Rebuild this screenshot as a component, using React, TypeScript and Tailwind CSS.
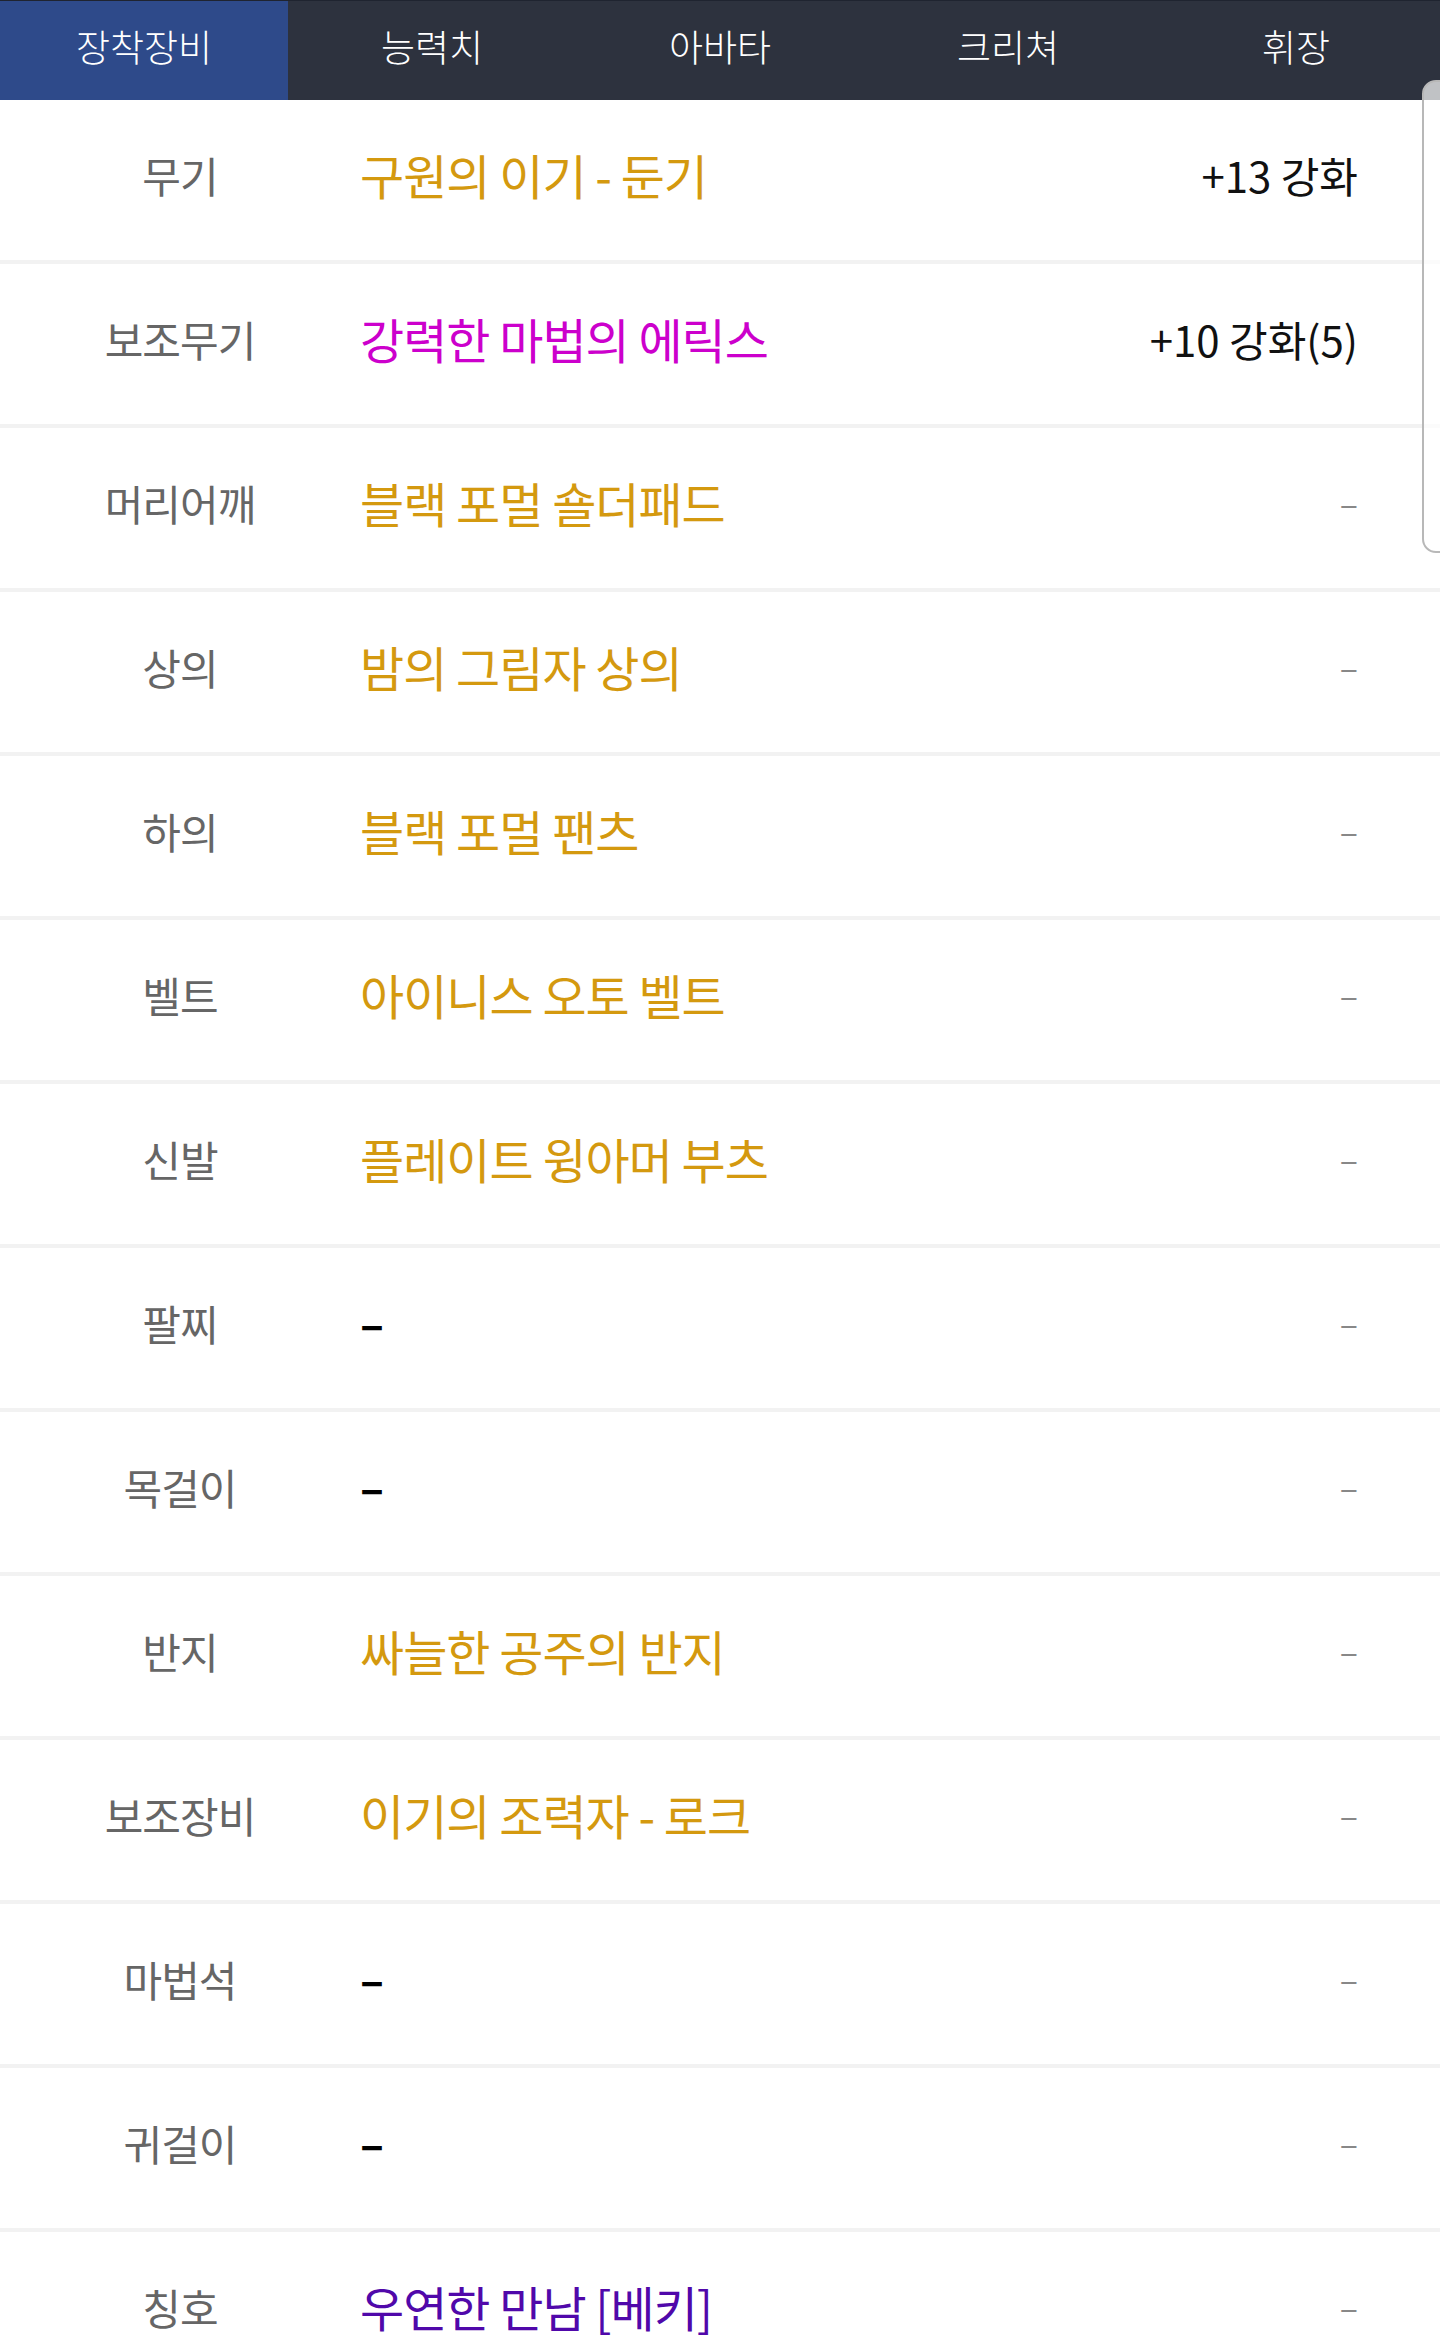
import React from "react";

const tabs = ["장착장비", "능력치", "아바타", "크리쳐", "휘장"];

type Row = { label: string; item: string; color?: string; extra?: string };

const rows: Row[] = [
  { label: "무기", item: "구원의 이기 - 둔기", color: "text-[#d4990f]", extra: "+13 강화" },
  { label: "보조무기", item: "강력한 마법의 에릭스", color: "text-[#cc00cc]", extra: "+10 강화(5)" },
  { label: "머리어깨", item: "블랙 포멀 숄더패드", color: "text-[#d4990f]" },
  { label: "상의", item: "밤의 그림자 상의", color: "text-[#d4990f]" },
  { label: "하의", item: "블랙 포멀 팬츠", color: "text-[#d4990f]" },
  { label: "벨트", item: "아이니스 오토 벨트", color: "text-[#d4990f]" },
  { label: "신발", item: "플레이트 윙아머 부츠", color: "text-[#d4990f]" },
  { label: "팔찌", item: "" },
  { label: "목걸이", item: "" },
  { label: "반지", item: "싸늘한 공주의 반지", color: "text-[#d4990f]" },
  { label: "보조장비", item: "이기의 조력자 - 로크", color: "text-[#d4990f]" },
  { label: "마법석", item: "" },
  { label: "귀걸이", item: "" },
  { label: "칭호", item: "우연한 만남 [베키]", color: "text-[#5008aa]" },
];

const font = { fontFamily: '"Noto Sans CJK KR", "Noto Sans", sans-serif' };

export default function App() {
  return (
    <div className="relative w-[1440px] bg-white" style={font}>
      <div className="flex h-[100px] bg-[#2d323e] border-t border-[#1f2430]">
        {tabs.map((t, i) => (
          <div
            key={t}
            className={
              i === 0
                ? "flex-1 flex items-center justify-center pb-[8px] bg-[#2e4a8a] text-white text-[37px] font-light"
                : "flex-1 flex items-center justify-center pb-[8px] text-white text-[37px] font-light"
            }
          >
            {t}
          </div>
        ))}
      </div>
      <div>
        {rows.map((r) => (
          <div key={r.label} className="flex items-center h-[164px] pb-[12px] border-b-4 border-[#f2f2f2]">
            <div className="w-[360px] text-center text-[#666666] text-[42px] tracking-[-1px]">{r.label}</div>
            <div className="flex-1 min-w-0">
              {r.item ? (
                <span className={`${r.color} text-[48px] tracking-[-1px]`}>{r.item}</span>
              ) : (
                <span className="text-black text-[44px] font-bold">–</span>
              )}
            </div>
            <div className="pr-[82px] text-right">
              {r.extra ? (
                <span className="text-[#111111] text-[42px]">{r.extra}</span>
              ) : (
                <span className="text-[#888888] text-[34px]">–</span>
              )}
            </div>
          </div>
        ))}
      </div>
      <div className="absolute left-[1422px] top-[80px] w-[40px] h-[473px] rounded-[14px] border-2 border-[#b8b8b8] bg-white/70"></div>
    </div>
  );
}
